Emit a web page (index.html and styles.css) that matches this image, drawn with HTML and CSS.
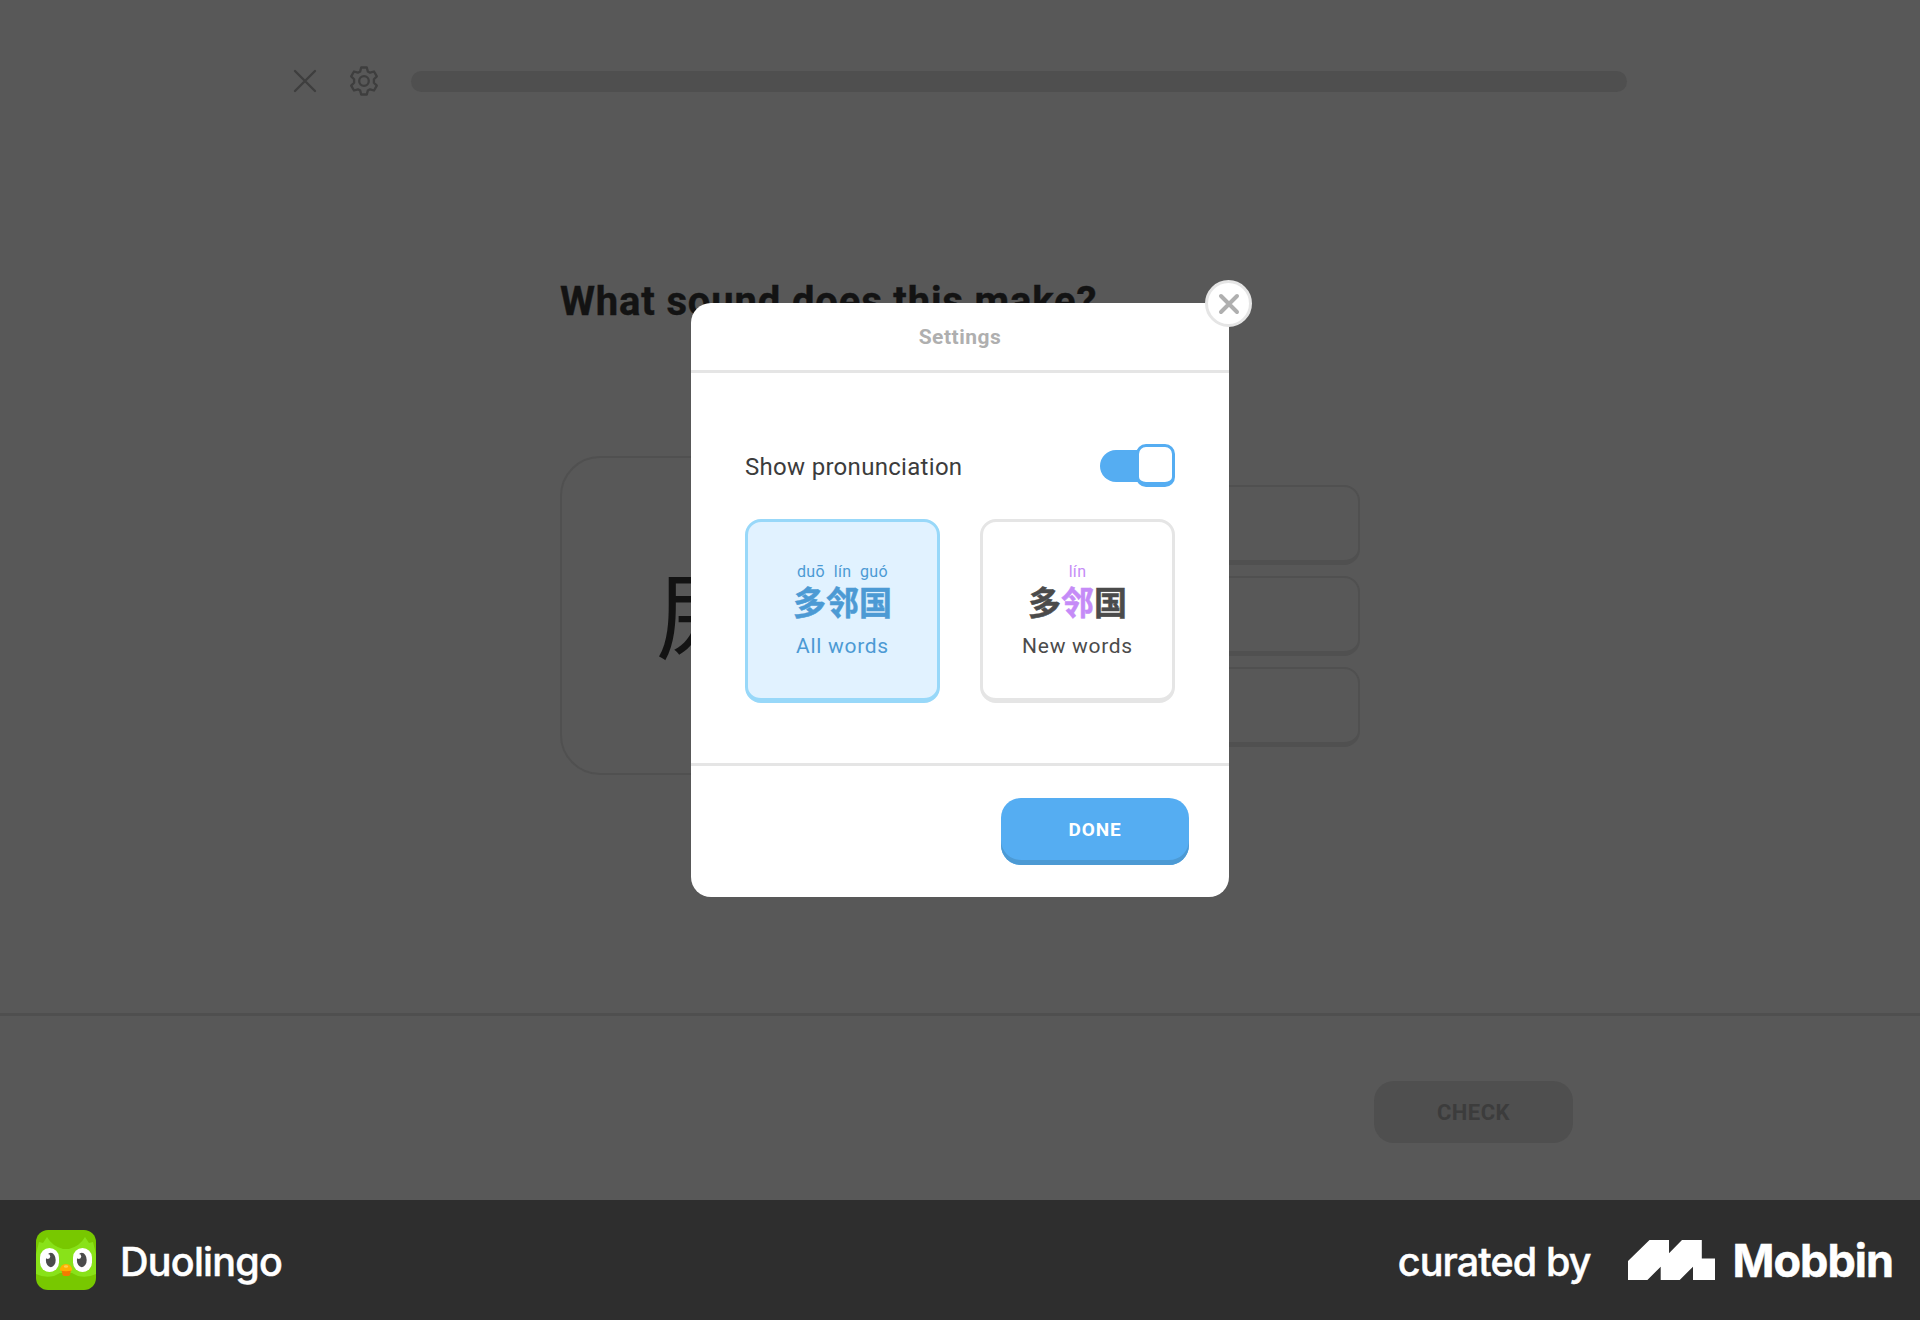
FILE: index.html
```html
<!DOCTYPE html>
<html lang="en">
<head>
<meta charset="utf-8">
<title>Duolingo</title>
<link rel="stylesheet" href="styles.css">
</head>
<body>
<div class="page">
  <main class="lesson">
    <header class="topbar">
      <svg class="icon-quit" viewBox="0 0 24 24"><path d="M2 2 22 22M22 2 2 22"/></svg>
      <svg class="icon-gear" viewBox="0 0 30 30"><path d="M12.200 1.500h5.600l1 3.900 2.300 1.300 3.900-1.200 2.800 4.900-2.900 2.900v3.400l2.900 2.900-2.800 4.900-3.900-1.200-2.300 1.300-1 3.900h-5.600l-1-3.900-2.300-1.300-3.900 1.200-2.800-4.900 2.900-2.900v-3.400l-2.900-2.900 2.800-4.900 3.900 1.200 2.300-1.300z"/><circle cx="15" cy="15" r="4.800"/></svg>
      <div class="progress"></div>
    </header>
    <section class="challenge">
      <h1 class="question">What sound does this make?</h1>
      <div class="board">
        <div class="glyph-card">尿</div>
        <div class="choices"><div class="choice"></div><div class="choice"></div><div class="choice"></div></div>
      </div>
    </section>
    <footer class="actions"><button class="check">CHECK</button></footer>
  </main>
  <section class="modal">
    <button class="close"><svg viewBox="0 0 24 24"><path d="M4 4 20 20M20 4 4 20"/></svg></button>
    <h2 class="modal-title">Settings</h2>
    <div class="modal-body">
      <div class="setting"><span class="setting-label">Show pronunciation</span><span class="toggle"><span class="track"></span><span class="thumb"></span></span></div>
      <div class="options">
        <div class="option selected"><div class="pinyin">duō&nbsp; lín&nbsp; guó</div><div class="hanzi">多邻国</div><div class="caption">All words</div></div>
        <div class="option"><div class="pinyin new">lín</div><div class="hanzi">多<span class="new">邻</span>国</div><div class="caption">New words</div></div>
      </div>
    </div>
    <div class="modal-footer"><button class="done">DONE</button></div>
  </section>
  <footer class="credit">
    <svg class="owl" viewBox="0 0 60 60"><rect width="60" height="60" rx="12" fill="#78c800"/><path d="M0 24 3 12l4 1 4-6q5 9 16 12h6q11-3 16-12l4 6 4-1 3 12v20q-8 4-18 2l-6-3H24l-6 3q-10 2-18-2z" fill="#89e219"/><rect x="4" y="18" width="19" height="24" rx="9.500" fill="#fff"/><rect x="37" y="18" width="19" height="24" rx="9.500" fill="#fff"/><ellipse cx="14.800" cy="30" rx="4.900" ry="7.200" fill="#4b4b4b"/><ellipse cx="45.800" cy="30" rx="4.900" ry="7.200" fill="#4b4b4b"/><circle cx="11.800" cy="26.500" r="2.400" fill="#fff"/><circle cx="42.800" cy="26.500" r="2.400" fill="#fff"/><path d="M25.500 40h9.500l-1 5q-.5 1-2 1h-3.500q-1.500 0-2-1z" fill="#f47b00"/><path d="M24 40.500q0-6.500 6-6.500t6 6.500q-6 1.500-12 0" fill="#ffb100"/><ellipse cx="30" cy="36.500" rx="2.200" ry="1.200" fill="#ffd04a"/></svg>
    <span class="app-name">Duolingo</span>
    <span class="curated">curated by</span>
    <svg class="mobbin-mark" viewBox="0 0 87 40"><path d="M0 21 21.500 0H41v13.300L54 0h19.800v18.500H87V40H65V26.700L51.700 40h-19V26.700L19.400 40H0z"/></svg>
    <span class="mobbin">Mobbin</span>
  </footer>
</div>
</body>
</html>
```
FILE: styles.css
```css
* { box-sizing: border-box; margin: 0; }
body { font-family: Roboto, "Noto Sans CJK SC", sans-serif; background: #585858; }
button { border: 0; font: inherit; padding: 0; }
svg { display: block; flex: none; }
.page { position: relative; width: 1920px; height: 1320px; overflow: hidden; display: flex; flex-direction: column; }
.lesson { height: 1200px; display: flex; flex-direction: column; background: #585858; }

.topbar { height: 162px; padding: 0 293px; display: flex; align-items: center; }
.icon-quit { width: 24px; height: 24px; margin-right: 31.5px; }
.icon-gear { width: 30px; height: 30px; margin-right: 32px; }
.icon-quit, .icon-gear { fill: none; stroke: #3e3e3e; stroke-width: 2.3; stroke-linecap: round; stroke-linejoin: round; }
.progress { flex: 1; height: 21px; border-radius: 11px; background: #4f4f4f; }

.challenge { flex: 1; width: 800px; margin: 0 auto; padding-top: 116px; }
.question { height: 48px; line-height: 48px; font-size: 40px; font-weight: 700; color: #131313; white-space: nowrap; letter-spacing: .84px; -webkit-text-stroke: .4px #131313; }
.board { margin-top: 130px; display: flex; justify-content: space-between; align-items: center; }
.glyph-card { width: 287px; height: 319px; border: 2px solid #505050; border-radius: 40px; padding-bottom: 7px; display: flex; align-items: center; justify-content: center; font-family: "Noto Sans CJK SC", sans-serif; font-size: 95px; line-height: 1; color: #131313; }
.choices { width: 480px; display: flex; flex-direction: column; gap: 11px; }
.choice { height: 80px; border: 2px solid #505050; border-bottom-width: 5px; border-radius: 16px; }

.actions { height: 187px; border-top: 3px solid #4f4f4f; padding: 65px 347px 0 0; display: flex; justify-content: flex-end; align-items: flex-start; }
.check { width: 199px; height: 62px; border-radius: 20px; background: #4f4f4f; color: #3c3c3c; font-size: 22px; font-weight: 700; letter-spacing: .5px; }

/* Dialog over the dimmed lesson */
.modal { position: absolute; left: 691px; top: 303px; width: 538px; height: 594px; border-radius: 20px; background: #fff; display: flex; flex-direction: column; }
.close { position: absolute; right: -23px; top: -23px; width: 47px; height: 47px; border: 3px solid #e5e5e5; border-radius: 50%; background: #fff; display: flex; align-items: center; justify-content: center; }
.close svg { width: 24px; height: 24px; fill: none; stroke: #afafaf; stroke-width: 4; stroke-linecap: round; }
.modal-title { height: 70px; border-bottom: 3px solid #e5e5e5; line-height: 68px; text-align: center; font-size: 21px; font-weight: 700; color: #afafaf; letter-spacing: .5px; }
.modal-body { height: 393px; padding: 71px 54px 0; border-bottom: 3px solid #e5e5e5; }
.setting { height: 43px; display: flex; justify-content: space-between; align-items: center; }
.setting-label { font-size: 24px; line-height: 28px; padding-top: 2px; color: #3c3c3c; letter-spacing: .3px; }
.toggle { display: flex; align-items: center; }
.track { width: 48px; height: 32px; margin-right: -12px; border-radius: 16px 0 0 16px; background: #55adf2; }
.thumb { width: 39px; height: 43px; border: 3px solid #55adf2; border-bottom-width: 5px; border-radius: 10px; background: #fff; }
.options { margin-top: 32px; display: flex; justify-content: space-between; }
.option { width: 195px; height: 184px; border: 3px solid #e5e5e5; border-bottom-width: 5px; border-radius: 16px; padding-top: 40px; text-align: center; color: #4b4b4b; }
.selected { border-color: #98d8f9; background: #e1f2ff; color: #4c9ad4; }
.pinyin { height: 20px; line-height: 20px; font-size: 16px; letter-spacing: .35px; }
.hanzi { margin-top: 1px; height: 36px; line-height: 36px; font-family: "Noto Sans CJK SC", sans-serif; font-weight: 700; font-size: 33px; -webkit-text-stroke: .5px; }
.new { color: #c58bf7; }
.caption { margin-top: 14px; height: 26px; line-height: 26px; font-size: 21px; letter-spacing: .7px; }
.modal-footer { flex: 1; display: flex; justify-content: flex-end; padding: 32px 40px 0 0; }
.done { width: 188px; height: 67px; border-radius: 20px; background: #55adf2; box-shadow: inset 0 -5px #4c9ad4; color: #fff; font-size: 19px; font-weight: 700; letter-spacing: .9px; padding-bottom: 5px; }

.credit { height: 120px; background: #2e2e2e; color: #fff; padding: 0 27px 0 36px; display: flex; align-items: center; font-family: Inter, sans-serif; white-space: nowrap; }
.owl { width: 60px; height: 60px; margin-right: 24px; }
.app-name, .curated { font-size: 39.5px; line-height: 48px; font-weight: 500; letter-spacing: -.75px; padding-top: 3px; -webkit-text-stroke: .5px; }
.curated { margin-left: auto; margin-right: 37px; letter-spacing: -.9px; }
.mobbin-mark { width: 87px; height: 40px; fill: #fff; margin-right: 18px; }
.mobbin { font-size: 45px; line-height: 54px; padding-top: 2px; font-weight: 700; letter-spacing: -1px; -webkit-text-stroke: .5px; }
```
